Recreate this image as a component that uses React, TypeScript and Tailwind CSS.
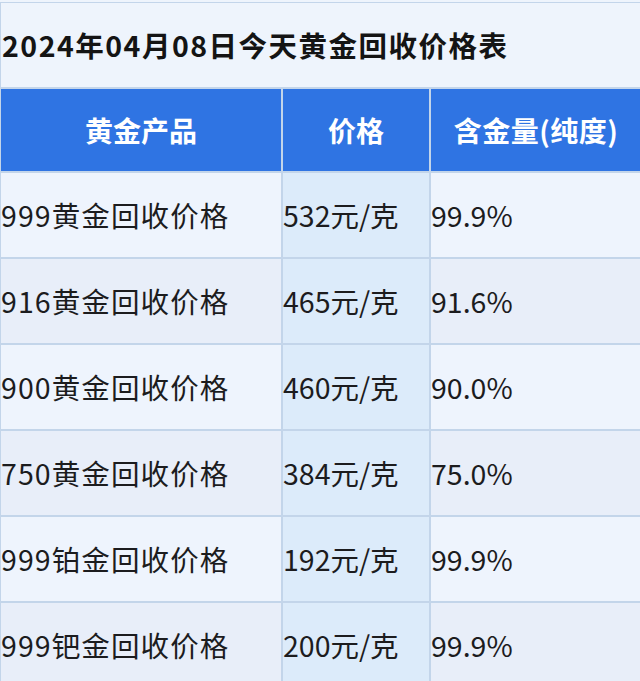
const ROWS = [
  { name: "999黄金回收价格", price: "532元/克", purity: "99.9%" },
  { name: "916黄金回收价格", price: "465元/克", purity: "91.6%" },
  { name: "900黄金回收价格", price: "460元/克", purity: "90.0%" },
  { name: "750黄金回收价格", price: "384元/克", purity: "75.0%" },
  { name: "999铂金回收价格", price: "192元/克", purity: "99.9%" },
  { name: "999钯金回收价格", price: "200元/克", purity: "99.9%" },
];

const font = "font-['Noto_Sans_CJK_SC','Noto_Sans',sans-serif]";

export default function App() {
  return (
    <div className={`h-[681px] w-[640px] overflow-hidden bg-[#eef4fc] pt-[2px] ${font}`}>
      <div className="grid grid-cols-[280px_146px_210px] gap-[2px] border-x border-t border-[#c3d5ea] bg-[#c3d5ea]">
        <div className="col-span-3 flex h-[84px] items-center bg-[#eef4fc] pl-[1px]">
          <h1 className="text-[28.5px] font-bold tracking-[1.5px] text-[#141414]">
            2024年04月08日今天黄金回收价格表
          </h1>
        </div>

        <div className="flex h-[82px] items-center justify-center bg-[#2f74e3] text-[28px] font-bold text-white">
          黄金产品
        </div>
        <div className="flex h-[82px] items-center justify-center bg-[#2f74e3] text-[28px] font-bold text-white">
          价格
        </div>
        <div className="flex h-[82px] items-center justify-center bg-[#2f74e3] text-[28px] font-bold tracking-[0.5px] text-white">
          含金量(纯度)
        </div>

        {ROWS.map((r, i) => (
          <div key={r.name} className="contents">
            <div
              className={`flex h-[84px] items-center text-[28.5px] tracking-[1.1px] text-[#1c1c1e] ${
                i % 2 === 0 ? "bg-[#eef4fd]" : "bg-[#e8eef9]"
              }`}
            >
              {r.name}
            </div>
            <div className="flex h-[84px] items-center bg-[#dcebfa] text-[28.5px] text-[#1c1c1e]">
              {r.price}
            </div>
            <div
              className={`flex h-[84px] items-center text-[28.5px] text-[#1c1c1e] ${
                i % 2 === 0 ? "bg-[#eef4fd]" : "bg-[#e8eef9]"
              }`}
            >
              {r.purity}
            </div>
          </div>
        ))}
      </div>
    </div>
  );
}
